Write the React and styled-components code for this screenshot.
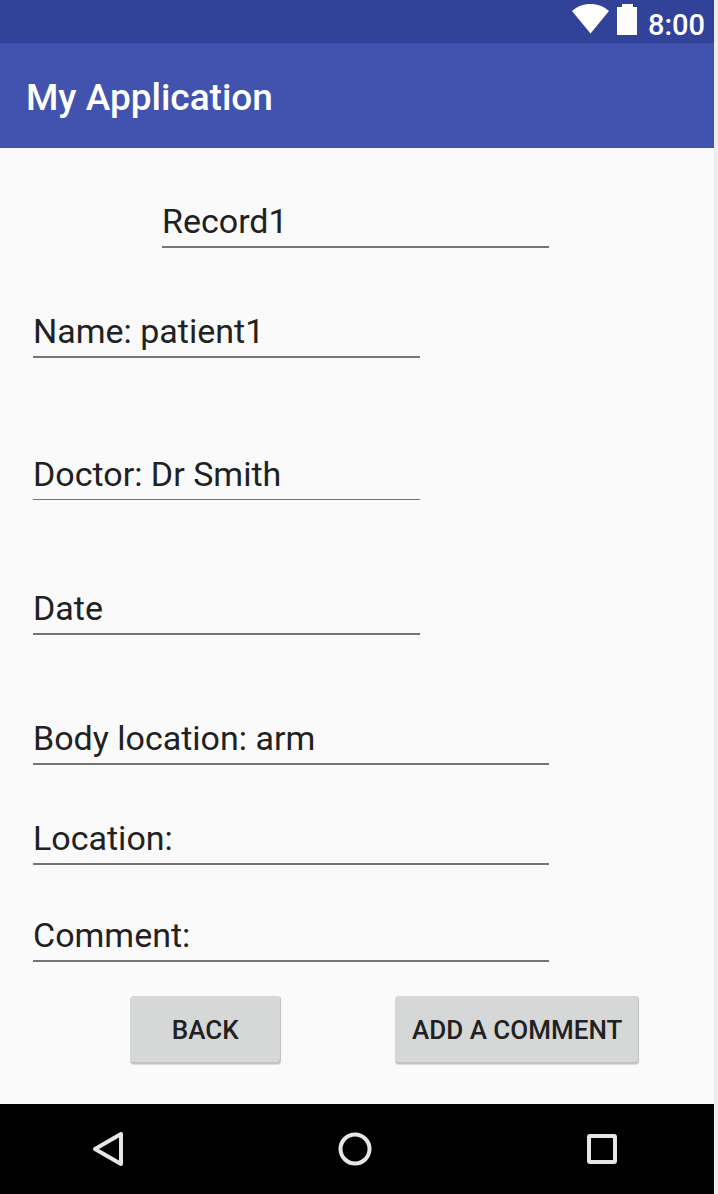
import React from "react";
import styled, { createGlobalStyle } from "styled-components";

const GlobalStyle = createGlobalStyle`
  *, *::before, *::after { box-sizing: border-box; }
  html, body { margin: 0; padding: 0; }
  body { background: #eeeeee; font-family: Roboto, "Liberation Sans", sans-serif; }
`;

const Screen = styled.div`
  display: flex;
  flex-direction: column;
  min-height: 100vh;
  margin-right: 4px;
  background: #fafafa;
  color: #212121;
`;

const StatusBar = styled.div`
  display: flex;
  justify-content: flex-end;
  align-items: flex-start;
  gap: 8px;
  height: 43px;
  padding: 4px 9px 0 0;
  background: #314299;
  color: #ffffff;
`;

const StatusIcon = styled.svg`
  display: block;
  flex: none;
`;

const Clock = styled.time`
  margin-left: 3px;
  padding-top: 5px;
  font-size: 29px;
  line-height: 32px;
  font-weight: 500;
`;

const AppBar = styled.header`
  display: flex;
  align-items: center;
  height: 105px;
  padding: 4px 26px 0;
  background: #4153af;
  color: #ffffff;
`;

const Title = styled.h1`
  margin: 0;
  font-size: 37px;
  line-height: 44px;
  font-weight: 500;
`;

const Form = styled.form`
  flex: 1;
  padding: 0 36px 40px 33px;
`;

const Field = styled.input`
  display: block;
  width: ${(p) => (p.$wide ? "80%" : "60%")};
  height: 50px;
  margin: ${(p) => p.$gap}px 0 0 ${(p) => (p.$inset ? "20%" : "0")};
  padding: 0 0 2px;
  border: 0;
  border-bottom: ${(p) => (p.$thin ? 1 : 2)}px solid #757575;
  border-radius: 0;
  outline: 0;
  background: transparent;
  color: #212121;
  font-family: inherit;
  font-size: 34px;
  line-height: 40px;
`;

const Actions = styled.div`
  display: flex;
  justify-content: space-between;
  margin-top: 34px;
  padding: 0 6% 0 15%;
`;

const ActionButton = styled.button`
  min-width: 151px;
  height: 68px;
  padding: 0 17px;
  border: 0;
  border-radius: 4px;
  background: #d6d8d7;
  box-shadow: inset -1px -2px 0 #c2c4c3, 0 1px 1px rgba(0, 0, 0, 0.12);
  color: #212121;
  font-family: inherit;
  font-size: 26px;
  line-height: 30px;
  font-weight: 500;
  white-space: nowrap;
  cursor: pointer;
`;

const NavBar = styled.nav`
  display: flex;
  align-items: center;
  justify-content: space-between;
  height: 90px;
  padding: 0 96px 0 92px;
  background: #000000;
`;

const NavButton = styled.button`
  width: 32px;
  height: 36px;
  padding: 0;
  border: 0;
  background: transparent;
  cursor: pointer;

  svg {
    display: block;
    overflow: visible;
    fill: none;
    stroke: #e6e6e6;
    stroke-width: 4;
    stroke-linejoin: round;
  }
`;

const fields = [
  { label: "Record", value: "Record1", gap: 50, inset: true },
  { label: "Name", value: "Name: patient1", gap: 60 },
  { label: "Doctor", value: "Doctor: Dr Smith", gap: 92, thin: true },
  { label: "Date", value: "Date", gap: 85 },
  { label: "Body location", value: "Body location: arm", gap: 80, wide: true },
  { label: "Location", value: "Location:", gap: 50, wide: true },
  { label: "Comment", value: "Comment:", gap: 47, wide: true },
];

export default function App() {
  return (
    <>
      <GlobalStyle />
      <Screen>
        <StatusBar>
          <StatusIcon width="37" height="30" viewBox="0 0 37 30" aria-hidden="true">
            <path d="M18.5 29.5 L0 7 C5 2.5 11.5 0 18.5 0 C25.5 0 32 2.5 37 7 Z" fill="#ffffff" />
          </StatusIcon>
          <StatusIcon width="20" height="31" viewBox="0 0 20 31" aria-hidden="true">
            <path d="M5 0 H16 V3 H20 V31 H0 V3 H5 Z" fill="#ffffff" />
          </StatusIcon>
          <Clock>8:00</Clock>
        </StatusBar>
        <AppBar>
          <Title>My Application</Title>
        </AppBar>
        <Form onSubmit={(e) => e.preventDefault()}>
          {fields.map((f) => (
            <Field
              key={f.label}
              type="text"
              aria-label={f.label}
              defaultValue={f.value}
              $gap={f.gap}
              $inset={f.inset}
              $wide={f.wide}
              $thin={f.thin}
            />
          ))}
          <Actions>
            <ActionButton type="button">BACK</ActionButton>
            <ActionButton type="button">ADD A COMMENT</ActionButton>
          </Actions>
        </Form>
        <NavBar>
          <NavButton type="button" aria-label="Back">
            <svg width="32" height="36" viewBox="0 0 32 36">
              <path d="M29 3 V33 L3 18 Z" />
            </svg>
          </NavButton>
          <NavButton type="button" aria-label="Home">
            <svg width="32" height="36" viewBox="0 0 32 36">
              <circle cx="16" cy="18" r="14.5" />
            </svg>
          </NavButton>
          <NavButton type="button" aria-label="Recent apps">
            <svg width="32" height="36" viewBox="0 0 32 36">
              <rect x="3" y="5" width="26" height="26" rx="1" />
            </svg>
          </NavButton>
        </NavBar>
      </Screen>
    </>
  );
}
